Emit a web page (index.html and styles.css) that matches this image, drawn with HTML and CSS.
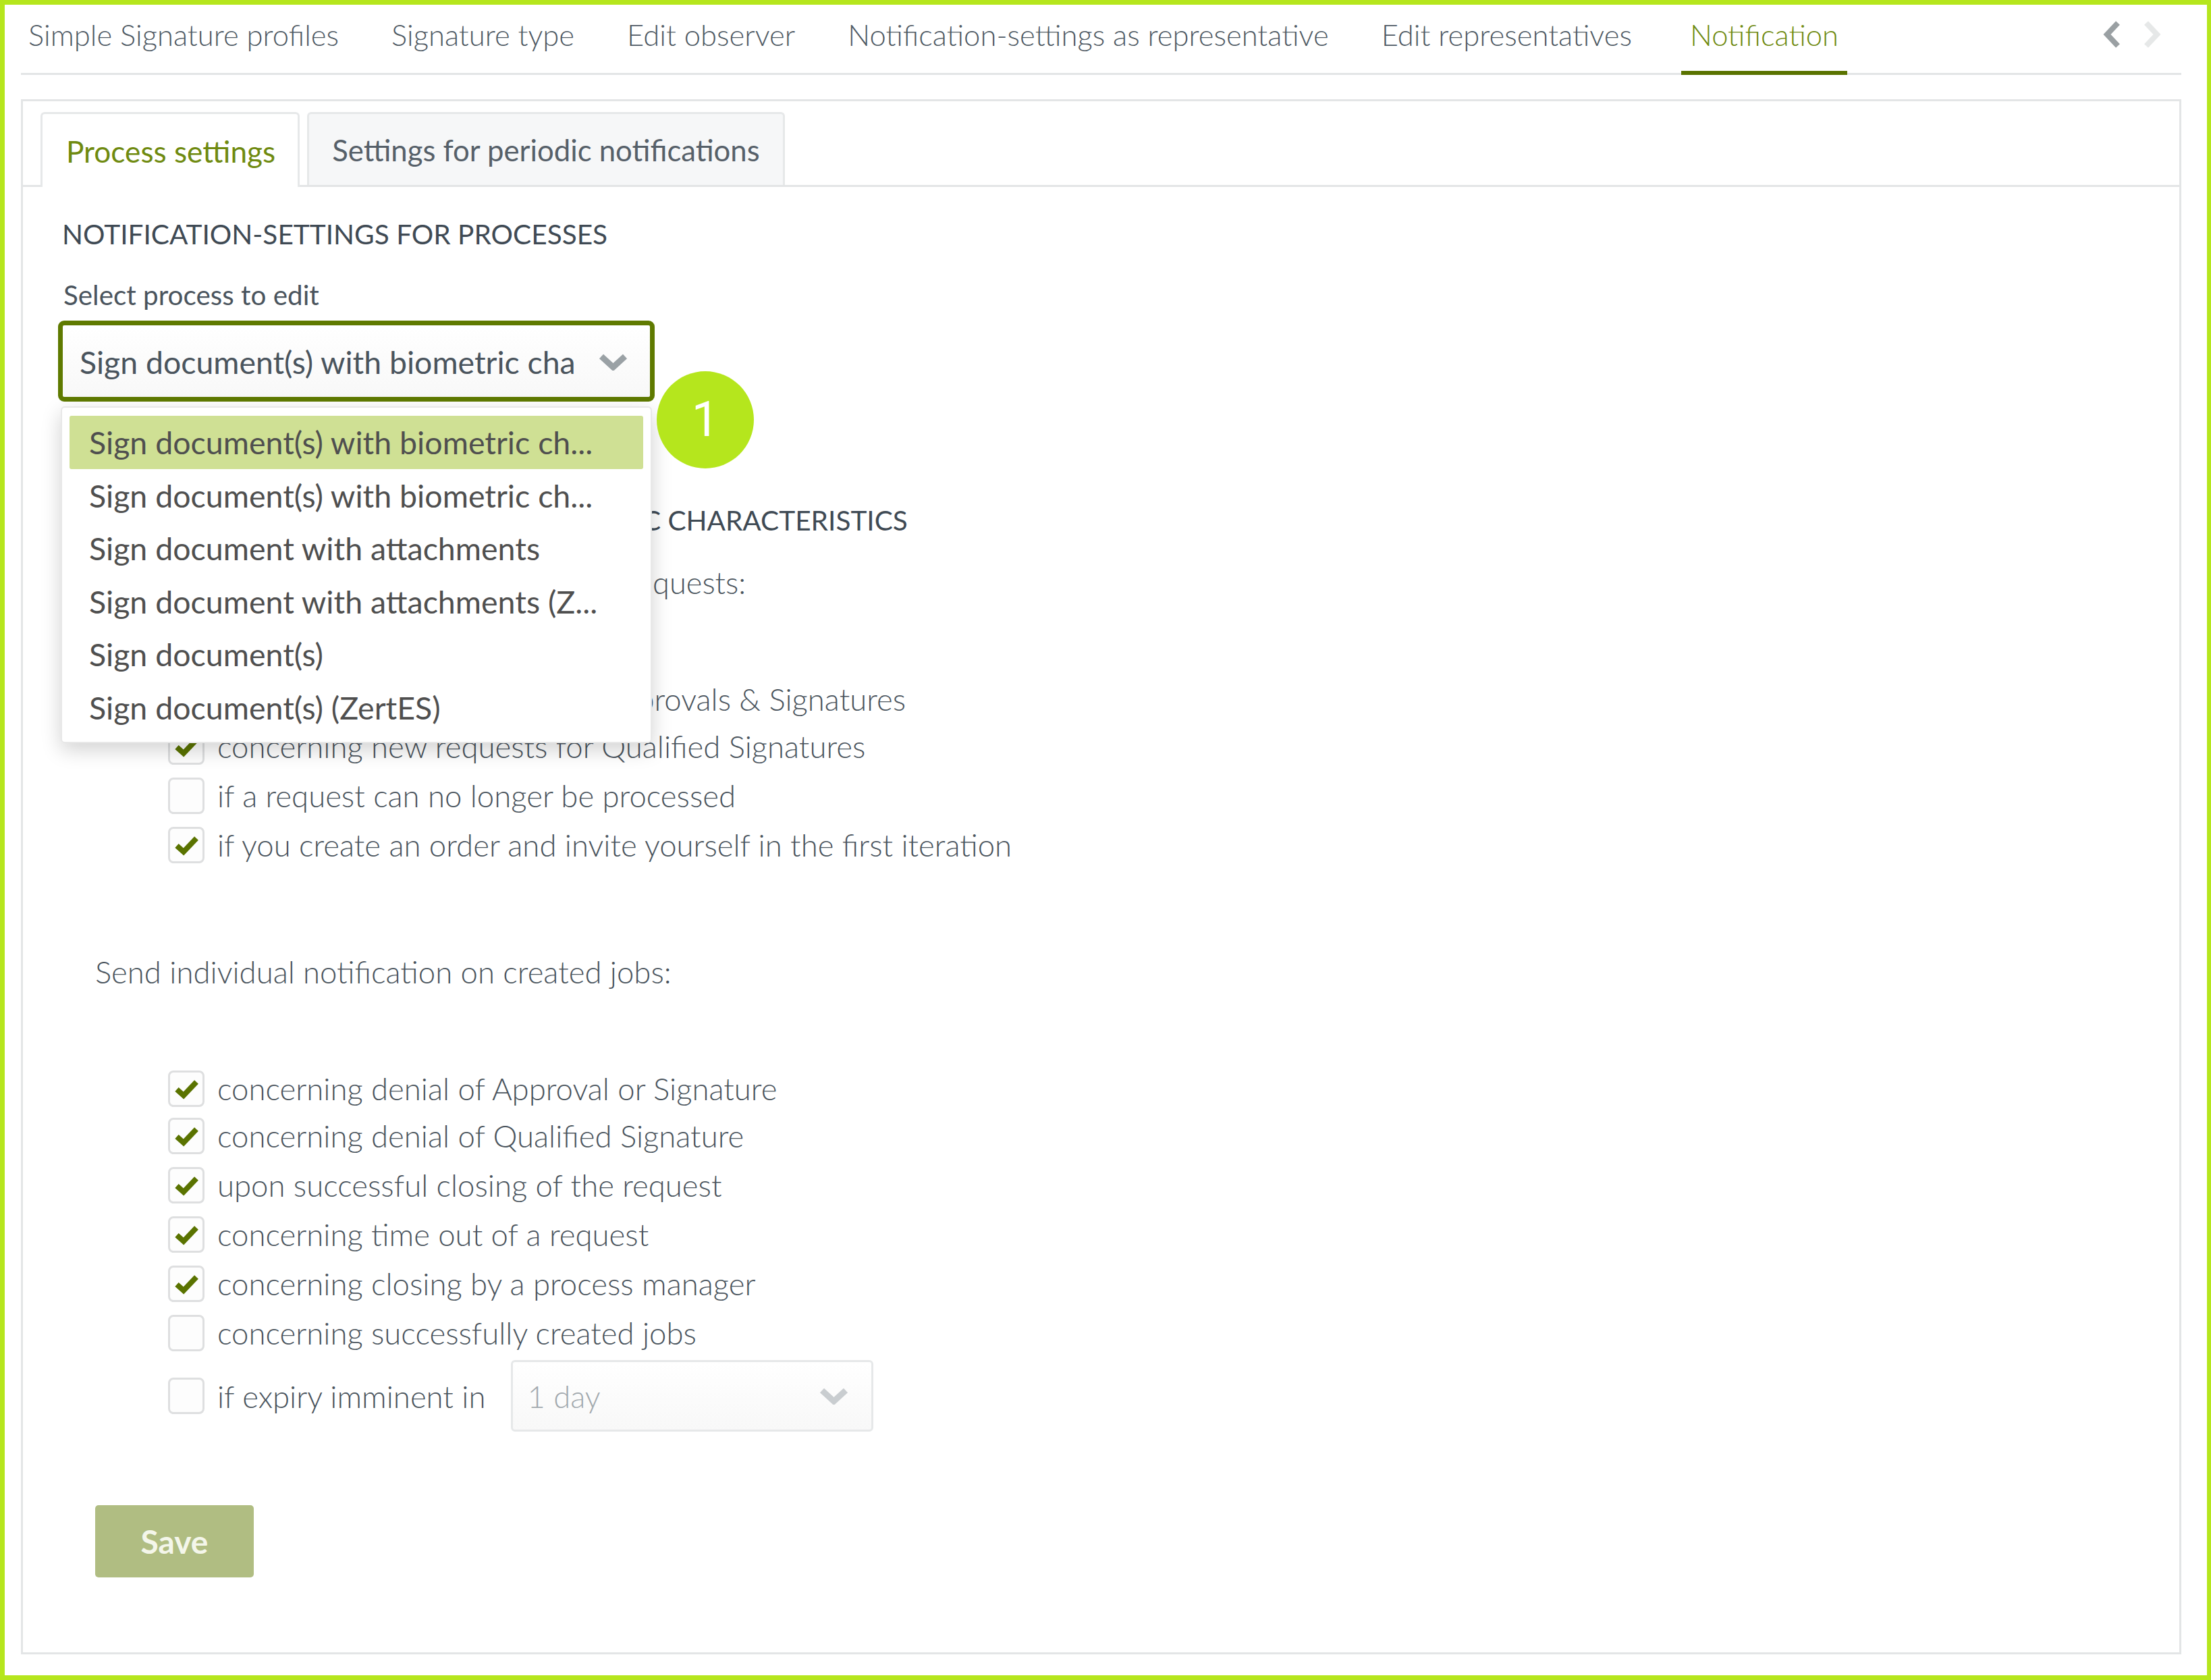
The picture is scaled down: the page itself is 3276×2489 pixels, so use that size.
FILE: index.html
```html
<!DOCTYPE html>
<html lang="en">
<head>
<meta charset="utf-8">
<title>Notification settings</title>
<link rel="stylesheet" href="styles.css">
</head>
<body>
<div class="frame">
  <nav class="nav">
    <a class="nav-item">Simple Signature profiles</a>
    <a class="nav-item">Signature type</a>
    <a class="nav-item">Edit observer</a>
    <a class="nav-item">Notification-settings as representative</a>
    <a class="nav-item">Edit representatives</a>
    <a class="nav-item nav-item-active">Notification</a>
    <div class="nav-arrows">
      <svg class="nav-arrow" viewBox="0 0 28 42"><path d="M23 4 L7 21 L23 38" /></svg>
      <svg class="nav-arrow nav-arrow-off" viewBox="0 0 28 42"><path d="M5 4 L21 21 L5 38" /></svg>
    </div>
  </nav>

  <section class="panel">
    <div class="tabs">
      <div class="tab tab-active">Process settings</div>
      <div class="tab">Settings for periodic notifications</div>
    </div>
    <div class="content">
      <h2 class="heading">NOTIFICATION-SETTINGS FOR PROCESSES</h2>
      <div class="label">Select process to edit</div>
      <div class="picker">
        <div class="select select-open">
          <span class="select-text">Sign document(s) with biometric cha</span>
          <svg class="chevron" viewBox="0 0 43 25"><path d="M4 4 L21.5 20 L39 4"/></svg>
        </div>
        <ul class="menu">
          <li class="menu-item menu-item-on">Sign document(s) with biometric ch...</li>
          <li class="menu-item">Sign document(s) with biometric ch...</li>
          <li class="menu-item">Sign document with attachments</li>
          <li class="menu-item">Sign document with attachments (Z...</li>
          <li class="menu-item">Sign document(s)</li>
          <li class="menu-item">Sign document(s) (ZertES)</li>
        </ul>
        <div class="badge">1</div>
      </div>

      <h2 class="heading heading-second">SIGN DOCUMENT(S) WITH BIOMETRIC CHARACTERISTICS</h2>
      <p class="intro intro-first">Send individual notification on incoming requests:</p>
      <div class="rows">
        <label class="row row-short"><span class="box"><svg viewBox="0 0 48 48"><path d="M10 25 L20 34 L39 14"/></svg></span>concerning new requests for Approvals &amp; Signatures</label>
        <label class="row"><span class="box"><svg viewBox="0 0 48 48"><path d="M10 25 L20 34 L39 14"/></svg></span>concerning new requests for Qualified Signatures</label>
        <label class="row"><span class="box"></span>if a request can no longer be processed</label>
        <label class="row"><span class="box"><svg viewBox="0 0 48 48"><path d="M10 25 L20 34 L39 14"/></svg></span>if you create an order and invite yourself in the first iteration</label>
      </div>

      <p class="intro intro-second">Send individual notification on created jobs:</p>
      <div class="rows">
        <label class="row row-short"><span class="box"><svg viewBox="0 0 48 48"><path d="M10 25 L20 34 L39 14"/></svg></span>concerning denial of Approval or Signature</label>
        <label class="row"><span class="box"><svg viewBox="0 0 48 48"><path d="M10 25 L20 34 L39 14"/></svg></span>concerning denial of Qualified Signature</label>
        <label class="row"><span class="box"><svg viewBox="0 0 48 48"><path d="M10 25 L20 34 L39 14"/></svg></span>upon successful closing of the request</label>
        <label class="row"><span class="box"><svg viewBox="0 0 48 48"><path d="M10 25 L20 34 L39 14"/></svg></span>concerning time out of a request</label>
        <label class="row"><span class="box"><svg viewBox="0 0 48 48"><path d="M10 25 L20 34 L39 14"/></svg></span>concerning closing by a process manager</label>
        <label class="row"><span class="box"></span>concerning successfully created jobs</label>
        <div class="row row-select">
          <span class="box"></span>if expiry imminent in
          <div class="select select-small">
            <span class="select-text">1 day</span>
            <svg class="chevron chevron-light" viewBox="0 0 43 25"><path d="M4 4 L21.5 20 L39 4"/></svg>
          </div>
        </div>
      </div>

      <button class="save" type="button">Save</button>
    </div>
  </section>
</div>
</body>
</html>
```

FILE: styles.css
```css
* { box-sizing: border-box; }
html, body { margin: 0; padding: 0; }
body { font-family: "Lato", "Liberation Sans", sans-serif; background: #fff; }

.frame {
  width: 3276px;
  height: 2489px;
  border: solid #b5e61d;
  border-width: 7px 6px 7px 7px;
  padding: 0 38px 31px 24px;
  display: flex;
  flex-direction: column;
  background: #fff;
}

/* top navigation */
.nav {
  height: 104px;
  flex: none;
  display: flex;
  gap: 55px;
  border-bottom: 3px solid #e3e5e6;
}
.nav-item {
  display: flex;
  align-items: center;
  height: 104px;
  padding: 0 12px 16px 11px;
  font-size: 43.6px;
  font-weight: 300;
  color: #4f5a64;
  white-space: nowrap;
}
.nav-item-active {
  color: #6f8a10;
  border-bottom: 6px solid #5a7300;
  margin-left: 6px;
  padding: 0 13px 10px;
}
.nav-arrows {
  margin-left: auto;
  display: flex;
  gap: 32px;
  padding: 23px 29px 0 0;
}
.nav-arrow { width: 28px; height: 42px; fill: none; stroke: #9aa0a3; stroke-width: 8; }
.nav-arrow-off { stroke: #e6e8e8; }

/* panel */
.panel {
  flex: 1;
  margin-top: 36px;
  border: 3px solid #e3e5e6;
  display: flex;
  flex-direction: column;
}
.tabs {
  display: flex;
  gap: 11px;
  height: 127px;
  flex: none;
  padding: 16px 0 0 26px;
  border-bottom: 3px solid #e3e5e6;
}
.tab {
  height: 108px;
  padding: 0 34px;
  display: flex;
  align-items: center;
  border: 3px solid #e6e8e9;
  border-bottom: 0;
  border-radius: 6px 6px 0 0;
  background: #f6f7f8;
  font-size: 43.7px;
  color: #566069;
  white-space: nowrap;
}
.tab-active {
  background: #fff;
  color: #6f8a10;
  height: 111px;
  padding: 0 33px 0 35px;
  font-size: 44.2px;
  position: relative;
  z-index: 1;
}

.content { padding: 40px 0 0 58px; }

.heading {
  margin: 0;
  height: 60px;
  line-height: 60px;
  font-size: 40.6px;
  font-weight: 400;
  color: #3f4a54;
  white-space: nowrap;
}
.heading-second { margin-top: 146px; padding-left: 155px; }
.label {
  margin-top: 30px;
  margin-left: 2px;
  height: 60px;
  line-height: 60px;
  font-size: 40.4px;
  color: #4a545d;
}

/* selects */
.picker { position: relative; margin-top: 8px; width: 884px; margin-left: -6px; }
.select {
  display: flex;
  align-items: center;
  justify-content: space-between;
  background: linear-gradient(#fff, #f8f8f8);
  white-space: nowrap;
}
.select-open {
  height: 120px;
  border: 7px solid #5f7a00;
  border-radius: 9px;
  padding: 2px 33px 0 25px;
  font-size: 46.4px;
  color: #4a545d;
}
.select-small {
  width: 537px;
  height: 106px;
  margin-left: 38px;
  padding: 0 34px 0 21px;
  border: 3px solid #e6e8e9;
  border-radius: 6px;
  color: #a2a9ae;
}
.chevron { width: 43px; height: 25px; fill: none; stroke: #9aa1a5; stroke-width: 9; flex: none; }
.chevron-light { stroke: #c9cdd0; }

.menu {
  position: absolute;
  z-index: 5;
  top: 127px;
  left: 4px;
  width: 876px;
  margin: 0;
  padding: 12px 11px;
  list-style: none;
  background: #fff;
  border: 2px solid #e8e8e8;
  border-radius: 6px;
  box-shadow: 0 10px 30px rgba(0, 0, 0, .18);
}
.menu-item {
  height: 78.5px;
  line-height: 78.5px;
  padding-left: 29px;
  font-size: 46.5px;
  color: #4f4f4f;
  white-space: nowrap;
  border-radius: 3px;
}
.menu-item-on { background: #cfe094; }

.badge {
  position: absolute;
  z-index: 6;
  left: 887px;
  top: 75px;
  width: 144px;
  height: 144px;
  border-radius: 50%;
  background: #b5e61d;
  color: #fff;
  font-family: "Roboto", sans-serif;
  font-size: 72px;
  line-height: 144px;
  text-align: center;
}

/* checkbox lists */
.intro {
  margin: 0;
  height: 60px;
  line-height: 60px;
  padding-left: 49px;
  font-size: 45.5px;
  font-weight: 300;
  color: #4a545d;
  white-space: nowrap;
}
.intro-first { margin-top: 32px; font-size: 45.2px; }
.intro-second { margin-top: 122px; }
.rows { margin-top: 106px; padding-left: 157px; }
.row {
  display: flex;
  align-items: center;
  height: 73px;
  font-size: 45.5px;
  font-weight: 300;
  color: #4a545d;
  white-space: nowrap;
}
.row-short { margin-bottom: -3px; }
.row-select { height: 106px; margin-top: 4px; }
.box {
  width: 54px;
  height: 54px;
  flex: none;
  margin-right: 19px;
  border: 3px solid #dedfe0;
  border-radius: 8px;
  background: #fdfdfd;
}
.box svg { display: block; width: 48px; height: 48px; fill: none; stroke: #5a7300; stroke-width: 8; }

.save {
  display: block;
  margin: 109px 0 0 49px;
  width: 235px;
  height: 107px;
  border: 0;
  border-radius: 5px;
  background: #b0bd82;
  color: #f4f6ea;
  font-family: inherit;
  font-size: 48px;
  font-weight: 700;
}
```
